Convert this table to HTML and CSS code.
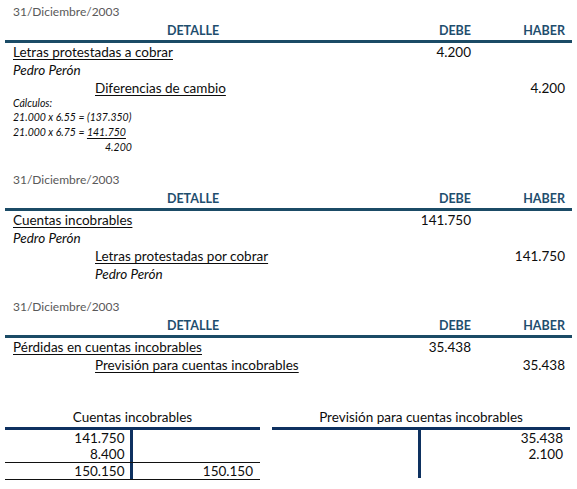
FILE: index.html
```html
<!DOCTYPE html>
<html lang="es">
<head>
    <meta charset="UTF-8">
    <title>Asientos - Letras protestadas</title>
    <link rel="stylesheet" href="styles.css">
</head>
<body>

    <div class="journal first">
        <div class="date">31/Diciembre/2003</div>
        <div class="row head">
            <div class="detail">DETALLE</div>
            <div class="amount">DEBE</div>
            <div class="amount">HABER</div>
        </div>
        <div class="row">
            <div class="detail"><u>Letras protestadas a cobrar</u></div>
            <div class="amount">4.200</div>
            <div class="amount"></div>
        </div>
        <div class="row">
            <div class="detail"><i>Pedro Perón</i></div>
            <div class="amount"></div>
            <div class="amount"></div>
        </div>
        <div class="row">
            <div class="detail indent"><u>Diferencias de cambio</u></div>
            <div class="amount"></div>
            <div class="amount">4.200</div>
        </div>
        <div class="calc">
            <div class="calc-title">Cálculos:</div>
            <div class="calc-line">21.000 x 6.55 = (137.350)</div>
            <div class="calc-line">21.000 x 6.75 = <u>141.750</u></div>
            <div class="calc-line calc-result">4.200</div>
        </div>
    </div>

    <div class="journal second">
        <div class="date">31/Diciembre/2003</div>
        <div class="row head">
            <div class="detail">DETALLE</div>
            <div class="amount">DEBE</div>
            <div class="amount">HABER</div>
        </div>
        <div class="row">
            <div class="detail"><u>Cuentas incobrables</u></div>
            <div class="amount">141.750</div>
            <div class="amount"></div>
        </div>
        <div class="row">
            <div class="detail"><i>Pedro Perón</i></div>
            <div class="amount"></div>
            <div class="amount"></div>
        </div>
        <div class="row">
            <div class="detail indent"><u>Letras protestadas por cobrar</u></div>
            <div class="amount"></div>
            <div class="amount">141.750</div>
        </div>
        <div class="row">
            <div class="detail indent"><i>Pedro Perón</i></div>
            <div class="amount"></div>
            <div class="amount"></div>
        </div>
    </div>

    <div class="journal third">
        <div class="date">31/Diciembre/2003</div>
        <div class="row head">
            <div class="detail">DETALLE</div>
            <div class="amount">DEBE</div>
            <div class="amount">HABER</div>
        </div>
        <div class="row">
            <div class="detail"><u>Pérdidas en cuentas incobrables</u></div>
            <div class="amount">35.438</div>
            <div class="amount"></div>
        </div>
        <div class="row">
            <div class="detail indent"><u>Previsión para cuentas incobrables</u></div>
            <div class="amount"></div>
            <div class="amount">35.438</div>
        </div>
    </div>

    <div class="ledger">
        <div class="t-account">
            <div class="t-title">Cuentas incobrables</div>
            <div class="t-row">
                <div class="t-cell left">141.750</div>
                <div class="t-cell"></div>
            </div>
            <div class="t-row">
                <div class="t-cell left">8.400</div>
                <div class="t-cell"></div>
            </div>
            <div class="t-row total">
                <div class="t-cell left">150.150</div>
                <div class="t-cell">150.150</div>
            </div>
        </div>

        <div class="t-account">
            <div class="t-title">Previsión para cuentas incobrables</div>
            <div class="t-row">
                <div class="t-cell left"></div>
                <div class="t-cell">35.438</div>
            </div>
            <div class="t-row">
                <div class="t-cell left"></div>
                <div class="t-cell">2.100</div>
            </div>
            <div class="t-row">
                <div class="t-cell left"></div>
                <div class="t-cell"></div>
            </div>
        </div>
    </div>

</body>
</html>
```

FILE: styles.css
```css
body {
    font-family: Lato, "Open Sans", sans-serif;
    font-size: 13.5px;
    color: #0d0d0d;
    background-color: white;
    margin: 0;
    padding: 0 5px;
}
.journal {
    width: 567px;
}
.journal.first {
    margin-top: 2px;
}
.journal.second {
    margin-top: 15px;
}
.journal.third {
    margin-top: 14px;
}
.date {
    font-size: 12px;
    color: #595959;
    line-height: 19px;
    padding-left: 8px;
}
.row {
    display: grid;
    grid-template-columns: 1fr 90px 94px;
    padding-right: 7px;
    line-height: 18px;
    height: 18px;
}
.row.head {
    line-height: 19px;
    height: 19px;
    font-weight: bold;
    font-size: 12.5px;
    color: #1f4e6e;
    border-bottom: 3px solid #1b4b66;
}
.head .detail {
    text-align: center;
    padding-left: 0;
}
.detail {
    padding-left: 8px;
    white-space: nowrap;
}
.detail.indent {
    padding-left: 90px;
}
.amount {
    text-align: right;
}
u {
    text-underline-offset: 2px;
}
.calc {
    font-style: italic;
    font-size: 10.5px;
    padding-left: 8px;
}
.calc-title {
    line-height: 13px;
}
.calc-line {
    line-height: 15px;
}
.calc-result {
    padding-left: 92px;
}
.ledger {
    display: grid;
    grid-template-columns: 255px 298px;
    gap: 12px;
    margin-top: 34px;
}
.t-title {
    text-align: center;
    line-height: 19px;
    border-bottom: 3px solid #0e3160;
}
.t-row {
    display: grid;
    grid-template-columns: 1fr 1fr;
    line-height: 16px;
}
.t-row.total {
    border-top: 1px solid #111;
    border-bottom: 1px solid #111;
}
.t-cell {
    height: 16px;
    text-align: right;
    padding-right: 7px;
}
.t-cell.left {
    border-right: 3px solid #0e3160;
    padding-right: 5px;
}
```
